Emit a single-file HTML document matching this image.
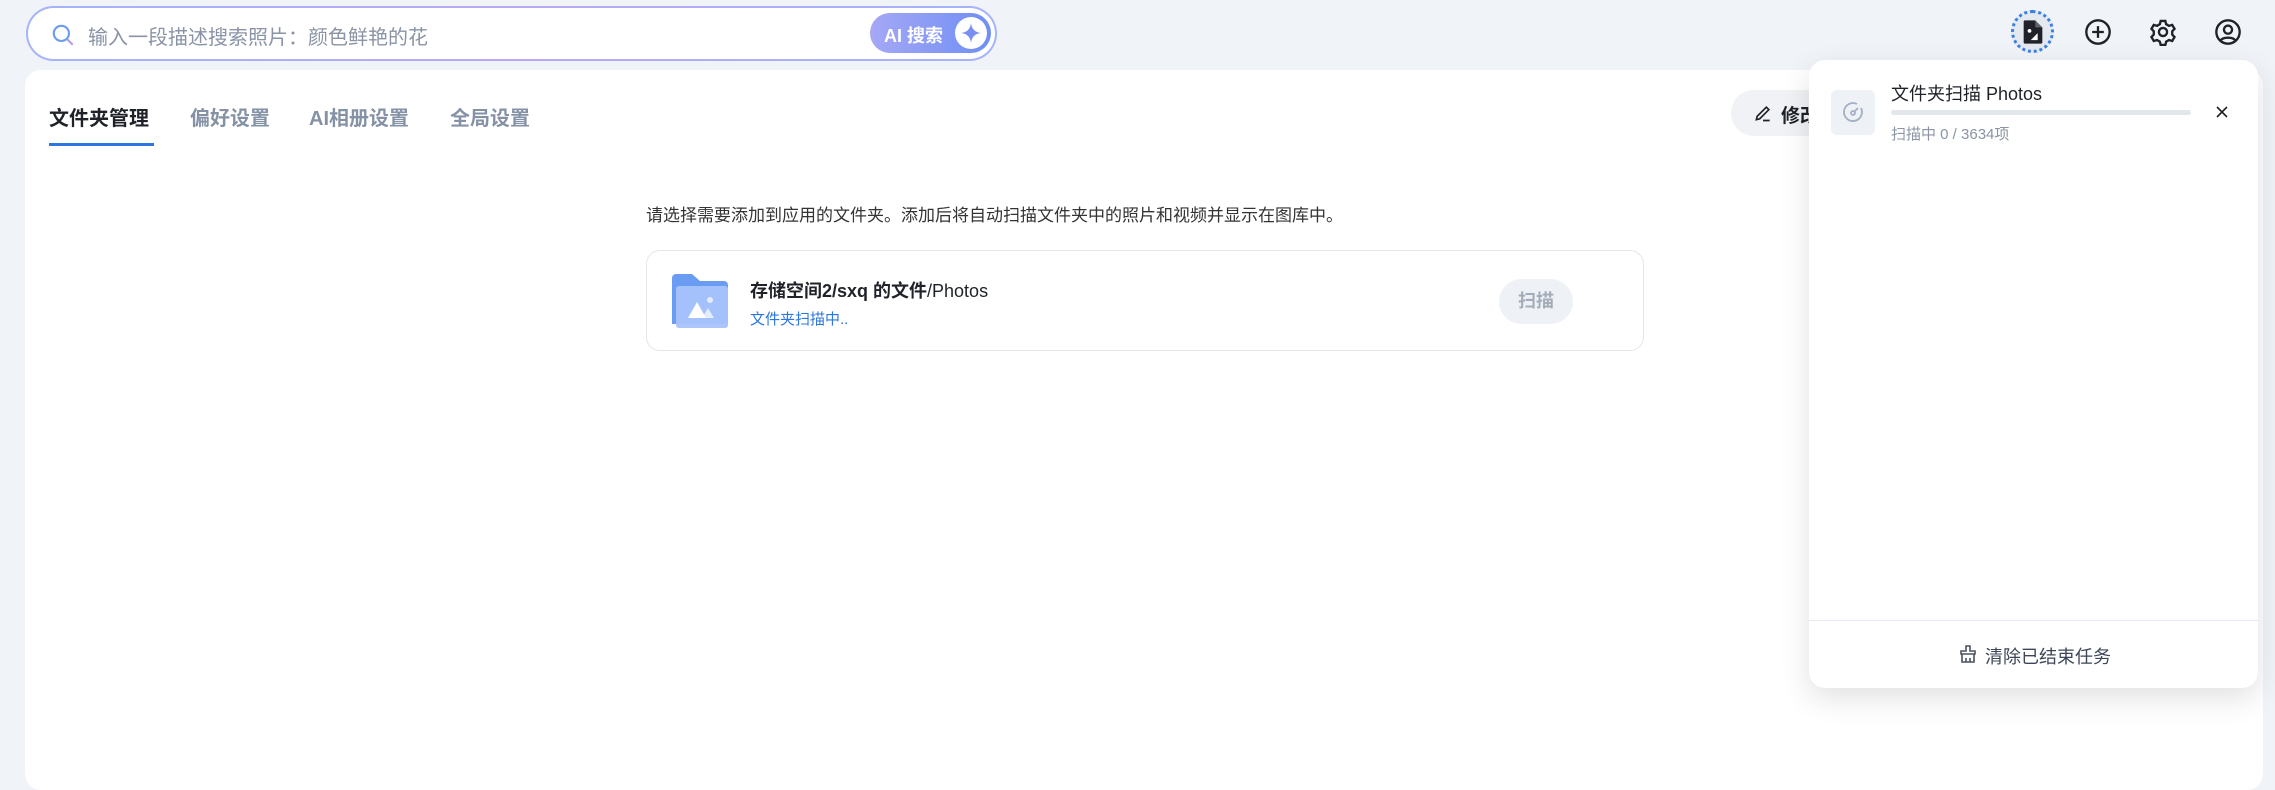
<!DOCTYPE html>
<html><head><meta charset="utf-8"><style>
*{margin:0;padding:0;box-sizing:border-box}
body{width:2275px;height:769px;background:#f0f3f8;font-family:"Liberation Sans","Noto Sans CJK SC",sans-serif;position:relative;overflow:hidden;color:#1f2329}
.abs{position:absolute}
.search{left:26px;top:6px;width:971px;height:55px;border-radius:28px;padding:2px;background:linear-gradient(90deg,#a5b4fc,#b9a8f5,#a5b4fc)}
.search .in{width:100%;height:100%;background:#fff;border-radius:26px;position:relative}
.main{left:25px;top:70px;width:2238px;height:720px;background:#fff;border-radius:16px}
.tab{top:102px;font-size:20px;font-weight:bold;color:#8592a6}
.popup{left:1809px;top:60px;width:449px;height:628px;background:#fff;border-radius:16px;box-shadow:0 10px 30px rgba(0,0,0,.12)}
</style></head><body>
<div class="abs search"><div class="in">
<svg class="abs" style="left:22px;top:14px" width="26" height="26" viewBox="0 0 24 24" fill="none" stroke="#6b9cf0" stroke-width="2"><circle cx="10.5" cy="10.5" r="7"/><path d="M16 16l5 5" stroke="#b39cf5"/></svg>
<div class="abs" style="left:60px;top:13px;font-size:20px;color:#8a94a6">输入一段描述搜索照片：颜色鲜艳的花</div>
<div class="abs" style="right:4px;top:5px;width:121px;height:40px;border-radius:20px;background:linear-gradient(90deg,#a5a8f5,#6f8ef5)"><span class="abs" style="left:14px;top:9px;color:#fff;font-weight:bold;font-size:18px">AI 搜索</span><div class="abs" style="right:4px;top:4px;width:32px;height:32px;border-radius:50%;background:#fff"><svg width="32" height="32" viewBox="0 0 32 32"><path d="M16 6 Q17 15 26 16 Q17 17 16 26 Q15 17 6 16 Q15 15 16 6Z" fill="#7a8ff2"/></svg></div></div>
</div></div>
<div class="abs" style="left:2011px;top:10px;width:43px;height:43px;border-radius:50%;border:3px dotted #3b7fe3;background:#e4e8ef"></div>
<svg class="abs" style="left:2019px;top:18px" width="28" height="28" viewBox="0 0 24 24"><path d="M5 2h9l6 6v13a1 1 0 0 1-1 1H5a1 1 0 0 1-1-1V3a1 1 0 0 1 1-1z" fill="#1f2329"/><path d="M14 2v6h6" fill="#fff" opacity=".3"/><circle cx="9" cy="11" r="1.6" fill="#fff"/><path d="M10 19l6-6v6z" fill="#fff"/></svg>
<svg class="abs" style="left:2084px;top:18px" width="28" height="28" viewBox="0 0 24 24" fill="none" stroke="#1f2329" stroke-width="2"><circle cx="12" cy="12" r="10"/><path d="M12 7v10M7 12h10"/></svg>
<svg class="abs" style="left:2149px;top:18px" width="28" height="28" viewBox="0 0 24 24" fill="none" stroke="#1f2329" stroke-width="2"><path d="M10 2.5h4l.7 2.8 2.4 1.4 2.8-.8 2 3.4-2 2.1v2.8l2 2.1-2 3.4-2.8-.8-2.4 1.4-.7 2.8h-4l-.7-2.8-2.4-1.4-2.8.8-2-3.4 2-2.1v-2.8l-2-2.1 2-3.4 2.8.8 2.4-1.4z"/><circle cx="12" cy="12" r="3.5"/></svg>
<svg class="abs" style="left:2214px;top:18px" width="28" height="28" viewBox="0 0 24 24" fill="none" stroke="#1f2329" stroke-width="2"><circle cx="12" cy="12" r="10"/><circle cx="12" cy="10" r="3.5"/><path d="M5.5 19.5c2-3.5 11-3.5 13 0"/></svg>

<div class="abs main"></div>
<div class="abs tab" style="left:49px;color:#1f2329">文件夹管理</div>
<div class="abs" style="left:49px;top:143px;width:105px;height:3px;background:#2b76e0"></div>
<div class="abs tab" style="left:190px">偏好设置</div>
<div class="abs tab" style="left:309px">AI相册设置</div>
<div class="abs tab" style="left:450px">全局设置</div>
<div class="abs" style="left:1731px;top:90px;width:160px;height:46px;border-radius:23px;background:#f0f2f5"><svg class="abs" style="left:22px;top:13px" width="20" height="20" viewBox="0 0 24 24" fill="none" stroke="#1f2329" stroke-width="2"><path d="M4 20l1-4L16 5l3 3L8 19zM12 21h8"/></svg><span class="abs" style="left:50px;top:11px;font-size:19px;font-weight:bold">修改</span></div>

<div class="abs" style="left:646px;top:201px;font-size:17px;color:#333">请选择需要添加到应用的文件夹。添加后将自动扫描文件夹中的照片和视频并显示在图库中。</div>
<div class="abs" style="left:646px;top:250px;width:998px;height:101px;border:1px solid #e3e6eb;border-radius:14px"></div>
<svg class="abs" style="left:672px;top:274px" width="56" height="54" viewBox="0 0 56 54"><path d="M0 4a4 4 0 0 1 4-4h16l8 7h24a4 4 0 0 1 4 4v39H0z" fill="#6b9cf4"/><rect x="4" y="12" width="52" height="42" rx="3" fill="#a8c3fb" opacity=".95"/><path d="M16 44l9-16 9 16z" fill="#fff"/><path d="M30 44l6-10 6 10z" fill="#fff" opacity=".7"/><circle cx="38" cy="26" r="3" fill="#fff" opacity=".7"/></svg>
<div class="abs" style="left:750px;top:277px;font-size:18px"><b>存储空间2/sxq 的文件</b>/Photos</div>
<div class="abs" style="left:750px;top:308px;font-size:15px;color:#2b76e0">文件夹扫描中..</div>
<div class="abs" style="left:1499px;top:279px;width:74px;height:45px;border-radius:23px;background:#eef1f6;color:#a4acb9;font-size:18px;font-weight:bold;text-align:center;line-height:45px">扫描</div>

<div class="abs popup">
<div class="abs" style="left:22px;top:30px;width:44px;height:45px;border-radius:6px;background:#eef1f6"><svg class="abs" style="left:10px;top:10px" width="24" height="24" viewBox="0 0 24 24" fill="none" stroke="#a4b0c2" stroke-width="1.8"><path d="M20 8a9 9 0 1 1-4-4"/><circle cx="12" cy="13" r="2"/><path d="M13.5 11.5L17 8"/></svg></div>
<div class="abs" style="left:82px;top:20px;font-size:18px">文件夹扫描 Photos</div>
<div class="abs" style="left:82px;top:50px;width:300px;height:5px;border-radius:3px;background:#e3e6eb"></div>
<div class="abs" style="left:82px;top:63px;font-size:15px;color:#8a94a6">扫描中 0 / 3634项</div>
<svg class="abs" style="left:405px;top:44px" width="16" height="16" viewBox="0 0 16 16" stroke="#1f2329" stroke-width="1.6"><path d="M3 3l10 10M13 3L3 13"/></svg>
<div class="abs" style="left:0;top:560px;width:449px;height:1px;background:#e5eaf2"></div>
<svg class="abs" style="left:150px;top:585px" width="18" height="18" viewBox="0 0 18 18" fill="none" stroke="#4a5262" stroke-width="1.6"><path d="M7 1h4v5h5v3H2V6h5zM3 9v8h12V9M7 17v-4M11 17v-4"/></svg>
<div class="abs" style="left:176px;top:583px;font-size:18px;color:#3d4657">清除已结束任务</div>
</div>
</body></html>
